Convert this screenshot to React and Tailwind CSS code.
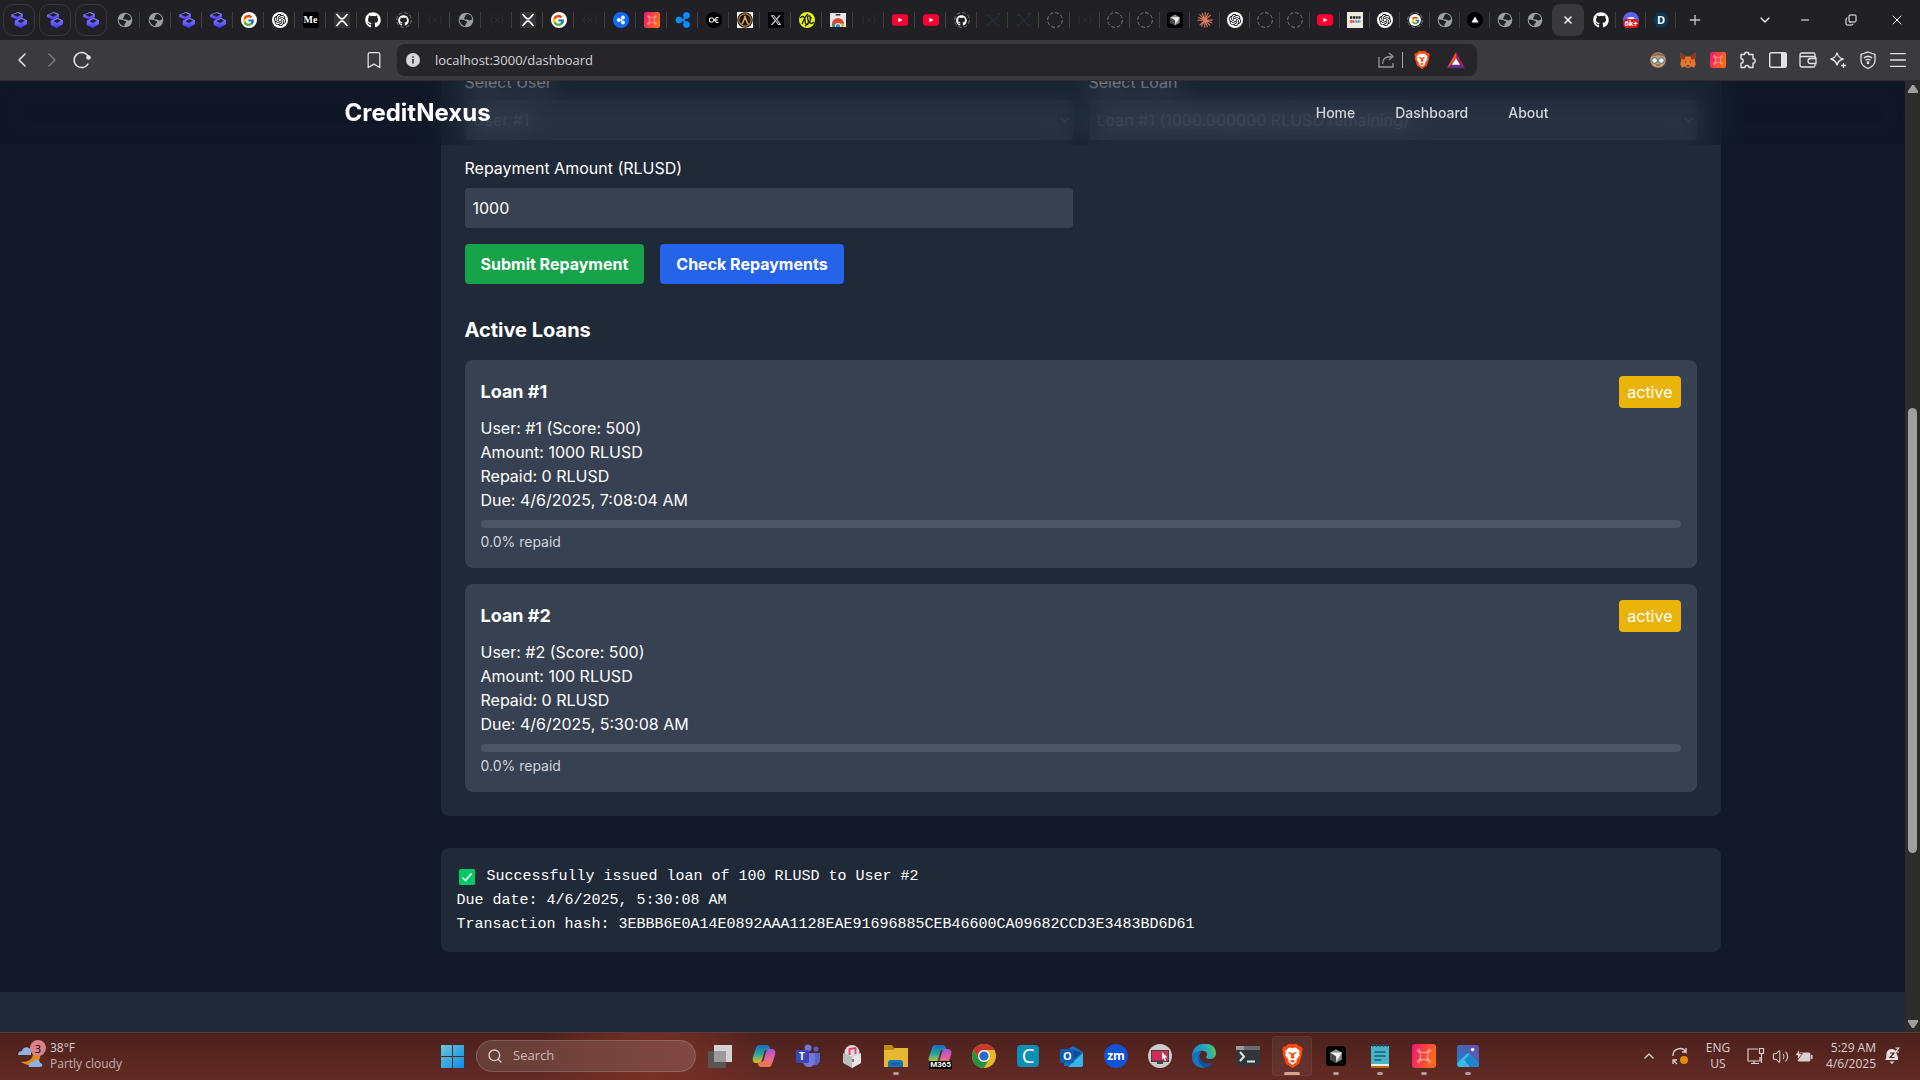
import { useState } from "react"
import {
  ChevronLeft, ChevronRight, ChevronDown, ChevronUp, Bookmark, X, Plus, Minus, Menu,
  Search, Volume2, Copy,
} from "lucide-react"
import { FaGithub, FaXTwitter } from "react-icons/fa6"
import { FcGoogle } from "react-icons/fc"
import { SiOpenai } from "react-icons/si"

/* ---------- tab favicons ---------- */

function StackIcon() {
  return (
    <svg viewBox="0 0 48 48" className="size-4">
      <defs>
        <linearGradient id="stack" x1="0" y1="0" x2="0" y2="1">
          <stop offset="0" stopColor="#8f8bf5" />
          <stop offset="1" stopColor="#3f31ff" />
        </linearGradient>
      </defs>
      <path fill="url(#stack)" fillRule="evenodd" d="M0 8 21 0l15 6v9L20 24 0 15ZM6 8l13 6 12-6-11-5Z" />
      <path fill="url(#stack)" fillRule="evenodd" d="M11 26 32 17l16 8v12L29 48 11 39Zm8 1 11 6 12-7-10-5Z" />
    </svg>
  )
}

function GlobeIcon() {
  return (
    <svg viewBox="0 0 16 16" className="size-4">
      <circle cx="8" cy="8" r="7.3" fill="#9aa0a6" />
      <path fill="#202124" d="M1.7 7.600 6 8c1.200.2 1 1 2 1.100 1.500.2 1.500 1.600.2 2.200-.8.4-.3 1.600-1.200 2.900-3.200-.6-5.400-3.300-5.300-6.600ZM7.300 3.600 9 1.800a6.300 6.300 0 0 1 5.200 5.500l-2.500 1.100c-1.200.3-1.500-.7-2.700-.8-1.500-.2-2.600 0-2.900-1.100-.2-1.200 1.500-1 1.200-2.900Z" />
    </svg>
  )
}

function GoogleIcon() {
  return (
    <span className="flex size-4 items-center justify-center rounded-full bg-white">
      <FcGoogle className="size-[13px]" />
    </span>
  )
}

function OpenAiIcon() {
  return (
    <span className="flex size-4 items-center justify-center rounded-full bg-white text-black">
      <SiOpenai className="size-3" />
    </span>
  )
}

function MediumIcon() {
  return (
    <span className="flex size-4 items-center justify-center rounded-xs bg-black font-['Liberation_Serif',serif] text-[10px] leading-4 font-bold text-white">
      Me
    </span>
  )
}

function XrplIcon() {
  return (
    <svg viewBox="0 0 16 16" className="size-4">
      <path fill="#343434" d="M0 0h16v16H0z" />
      <path fill="none" stroke="#fff" strokeWidth="1.700" d="m2.500 2 3.200 3.700c1.300 1.500 3.300 1.500 4.600 0L13.500 2M2.500 14l3.200-3.700c1.300-1.500 3.300-1.500 4.600 0l3.200 3.700" />
    </svg>
  )
}

function Ring() {
  return (
    <svg viewBox="0 0 16 16" className="absolute inset-0 size-4">
      <circle cx="8" cy="8" r="7.400" fill="none" stroke="#77777c" strokeWidth="1" strokeDasharray="3.800 2" />
    </svg>
  )
}

function GithubIcon() {
  return <FaGithub className="size-4 text-white" />
}

function GithubLoadingIcon() {
  return (
    <span className="relative flex size-4 items-center justify-center">
      <Ring />
      <FaGithub className="size-[11px] text-white" />
    </span>
  )
}

function GoogleLoadingIcon() {
  return (
    <span className="relative flex size-4 items-center justify-center">
      <Ring />
      <span className="relative flex size-3 items-center justify-center rounded-full bg-white">
        <FcGoogle className="size-[9px]" />
      </span>
    </span>
  )
}

function LoadingIcon() {
  return (
    <span className="relative size-4">
      <Ring />
    </span>
  )
}

function BracesIcon() {
  return (
    <svg viewBox="0 0 16 16" className="size-4" fill="none" stroke="#2c3034" strokeWidth="1">
      <path d="M4 3C2 3 3 5.500 2.500 7L1 8l1.500 1C3 10.500 2 13 4 13M12 3c2 0 1 2.500 1.500 4L15 8l-1.500 1c-.5 1.500.5 4-1.500 4M5.500 5.500l5 5M10.500 5.500l-5 5" />
    </svg>
  )
}

function FaintXIcon() {
  return (
    <svg viewBox="0 0 16 16" className="size-4" fill="none" stroke="#263038" strokeWidth="1.200">
      <path d="M1 3c4-2 8 10 14 11M15 1C13 6 6 9 1 14M1 3l4 1M11 2l4-1" />
    </svg>
  )
}

function Ripple({ color }) {
  return (
    <g fill={color} stroke={color}>
      <circle cx="4" cy="8" r="3" />
      <circle cx="11.500" cy="3.500" r="3" />
      <circle cx="11.500" cy="12.500" r="3" />
      <path strokeWidth="2" fill="none" d="M5 8h3c2 0 1.500-4 3.500-4.500M8 8c2 0 1.500 4 3.500 4.500" />
    </g>
  )
}

function RippleCircleIcon() {
  return (
    <svg viewBox="0 0 16 16" className="size-4">
      <circle cx="8" cy="8" r="8" fill="#0c6cf8" />
      <g transform="translate(3.500 3.500) scale(.56)"><Ripple color="#fff" /></g>
    </svg>
  )
}

function RippleIcon() {
  return (
    <svg viewBox="0 0 16 16" className="size-4">
      <Ripple color="#0a8cff" />
    </svg>
  )
}

function GemIcon({ className = "size-4" }) {
  return (
    <svg viewBox="0 0 24 24" className={className}>
      <defs>
        <linearGradient id="gem" x1="0" y1="0" x2="1" y2="0.300">
          <stop offset="0" stopColor="#f0147a" />
          <stop offset="1" stopColor="#f96a18" />
        </linearGradient>
      </defs>
      <rect width="24" height="24" rx="3" fill="url(#gem)" />
      <path fill="none" stroke="#ffb09c" strokeWidth="1.200" d="M7 7c3 2 7 2 10 0-2 3-2 7 0 10-3-2-7-2-10 0 2-3 2-7 0-10Z" />
      <g fill="none" stroke="#ffb09c" strokeWidth="1">
        <circle cx="6.500" cy="6.500" r="1.200" /><circle cx="17.500" cy="6.500" r="1.200" />
        <circle cx="6.500" cy="17.500" r="1.200" /><circle cx="17.500" cy="17.500" r="1.200" />
      </g>
    </svg>
  )
}

function OxIcon() {
  return (
    <svg viewBox="0 0 16 16" className="size-4">
      <circle cx="8" cy="8" r="8" fill="#000" />
      <path fill="none" stroke="#fff" strokeWidth="1.100" d="M12.500 5.500h-2L6.500 10h-2q-1 0-1-1V7q0-1 1-1h2l4 4.500h2M9 8h3" />
    </svg>
  )
}

function GoldIcon() {
  return (
    <svg viewBox="0 0 16 16" className="size-4">
      <path fill="#fff" d="M0 0h16v16H0z" />
      <circle cx="8" cy="8" r="7.800" fill="#19130d" />
      <circle cx="8" cy="8" r="6.200" fill="none" stroke="#b98439" strokeWidth="1.200" />
      <path fill="none" stroke="#d6a45c" strokeWidth="1.500" d="M4.500 12.500C6 11 7 8 8 4c1 4 2 7 3.500 8.500M8 4v4" />
    </svg>
  )
}

function TwitterIcon() {
  return (
    <span className="flex size-4 items-center justify-center bg-black text-gray-300">
      <FaXTwitter className="size-3" />
    </span>
  )
}

function LimeIcon() {
  return (
    <svg viewBox="0 0 16 16" className="size-4">
      <circle cx="8" cy="8" r="8" fill="#e2f317" />
      <path fill="none" stroke="#1b1c13" strokeWidth="1.300" d="M1 6c3-3 5-1 5 2s1 6 3 4-2-7 0-8 3 2 2 5 2 3 4 1M3 12c2-4 3-8 6-10M6 14c2-2 6-4 6-9" />
    </svg>
  )
}

function StoreIcon() {
  return (
    <svg viewBox="0 0 16 16" className="size-4">
      <path fill="#e8e8e8" d="M0 1h16v14H0z" />
      <rect x="5.500" y="2" width="5" height="1.500" rx=".7" fill="#333" />
      <path fill="#db4437" d="M2 12a6 6 0 0 1 12 0l-3 3H5Z" />
      <path fill="#f4b400" d="M10 11.500h4.200l-.7 3.500H9Z" />
      <path fill="#0f9d58" d="M1.900 11.500 6 14v1H2.500Z" />
      <path fill="#fff" d="M4.900 15a3.200 3.200 0 1 1 6.200 0Z" />
      <path fill="#4285f4" d="M5.800 15a2.300 2.300 0 1 1 4.400 0Z" />
    </svg>
  )
}

function YoutubeIcon() {
  return (
    <svg viewBox="0 0 16 16" className="size-4">
      <rect y="2.300" width="16" height="11.400" rx="3" fill="#ff0033" />
      <path fill="#fff" d="m6.300 5.700 4.200 2.300-4.200 2.300Z" />
    </svg>
  )
}

function CursorIcon({ className = "size-4" }) {
  return (
    <svg viewBox="0 0 16 16" className={className}>
      <rect width="16" height="16" rx="3" fill="#000" />
      <path fill="#8d8d8d" d="m8 2.500 4.700 2.700v5.600L8 13.500l-4.700-2.700V5.200Z" />
      <path fill="#4a4a4a" d="m3.300 5.200 4.700 3v5.300l-4.700-2.700Z" />
      <path fill="#f4f4f4" d="M3.300 5.200h9.400L8.200 12.600V8.100Z" />
    </svg>
  )
}

function ClaudeIcon() {
  return (
    <svg viewBox="0 0 16 16" className="size-4" stroke="#d97757" strokeWidth="1.100" strokeLinecap="round">
      <path d="M8.300.6 7.700 15.200M.8 8.300l14.400-.2M2.800 2.600l10 10.800M13.400 3.200 3 13M5.300 1.200l5 13.600M11.300 1.300 4.700 14.200M1.400 5.400l13.400 5.400" />
    </svg>
  )
}

function HackIcon() {
  return (
    <svg viewBox="0 0 16 16" className="size-4">
      <path fill="#edeadd" d="M0 0h16v16H0z" />
      <path stroke="#202020" strokeWidth="2.600" strokeDasharray="2.200 .6" d="M3 5.500h10.500" />
      <path stroke="#d7403e" strokeWidth="2.400" strokeDasharray="1.800 .5" d="M3 9.500h5" />
      <path stroke="#3694d1" strokeWidth="2.400" strokeDasharray="1.800 .5" d="M8.500 9.500h5" />
    </svg>
  )
}

function VercelIcon() {
  return (
    <svg viewBox="0 0 16 16" className="size-4">
      <circle cx="8" cy="8" r="8" fill="#000" />
      <path fill="#fff" d="m8 4.500 3.600 6H4.400Z" />
    </svg>
  )
}

function DiscordIcon() {
  return (
    <span className="relative size-4">
      <svg viewBox="0 0 16 16" className="size-4">
        <circle cx="8" cy="8" r="8" fill="#5865f2" />
        <path fill="#fff" d="M4.500 6c2-1.500 5-1.500 7 0v2h-7Z" />
      </svg>
      <span className="absolute bottom-0 left-1/2 -translate-x-1/2 rounded-[3px] bg-[#e0151b] px-px font-['Roboto',sans-serif] text-[8px] leading-[9px] font-bold text-white">
        6k+
      </span>
    </span>
  )
}

function DocsIcon() {
  return (
    <span className="relative flex size-4 items-center justify-center">
      <svg viewBox="0 0 16 16" className="absolute inset-0 size-4">
        <path fill="#0a3a50" d="M4 .8h8L16 8l-4 7.200H4L0 8Z" />
      </svg>
      <span className="relative text-[11px] leading-4 font-bold text-white">D</span>
    </span>
  )
}

const wideTabs = [
  GlobeIcon, GlobeIcon, StackIcon, StackIcon, GoogleIcon, OpenAiIcon, MediumIcon, XrplIcon,
  GithubIcon, GithubLoadingIcon, BracesIcon, GlobeIcon, BracesIcon, XrplIcon, GoogleIcon,
  BracesIcon, RippleCircleIcon, GemIcon, RippleIcon, OxIcon, GoldIcon, TwitterIcon, LimeIcon,
  StoreIcon, BracesIcon, YoutubeIcon, YoutubeIcon, GithubLoadingIcon, FaintXIcon, FaintXIcon,
  LoadingIcon,
]

const narrowTabs = [
  BracesIcon, LoadingIcon, LoadingIcon, CursorIcon, ClaudeIcon, OpenAiIcon, LoadingIcon,
  LoadingIcon, YoutubeIcon, HackIcon, OpenAiIcon, GoogleLoadingIcon, GlobeIcon, VercelIcon,
  GlobeIcon, GlobeIcon,
]

function Tab({ icon: Icon, wide, last }) {
  return (
    <button className={`relative flex h-8 shrink-0 items-center justify-center ${wide ? "w-[31px]" : "w-[30px]"}`}>
      <Icon />
      {!last && <span className="absolute right-0 h-4 w-px bg-[#3d3d42]" />}
    </button>
  )
}

function TabBar() {
  return (
    <div className="flex h-10 items-center bg-[#202025] text-white">
      <div className="flex gap-1 pl-[3px]">
        {[1, 2, 3].map(n => (
          <button key={n} className="flex size-8 items-center justify-center rounded-[10px] border border-[#38383d]">
            <StackIcon />
          </button>
        ))}
      </div>
      <div className="ml-[2px] flex">
        {wideTabs.map((icon, i) => <Tab key={i} icon={icon} wide />)}
        {narrowTabs.map((icon, i) => <Tab key={i} icon={icon} last={i === narrowTabs.length - 1} />)}
      </div>
      <button className="mx-[2px] flex size-8 shrink-0 items-center justify-center rounded-lg bg-[#38383d]">
        <X className="size-3" strokeWidth={3} />
      </button>
      <Tab icon={GithubIcon} />
      <Tab icon={DiscordIcon} />
      <Tab icon={DocsIcon} />
      <button className="flex w-[38px] shrink-0 items-center justify-center text-[#c6c6c8]">
        <Plus className="size-4" />
      </button>
      <div className="ml-auto flex items-center">
        <button className="flex w-[34px] justify-center"><ChevronDown className="size-4" /></button>
        <button className="flex w-[46px] justify-center"><Minus className="size-3" /></button>
        <button className="flex w-[46px] justify-center"><Copy className="size-3 -scale-x-100 rotate-180" /></button>
        <button className="flex w-[46px] justify-center"><X className="size-4" strokeWidth={1.500} /></button>
      </div>
    </div>
  )
}

/* ---------- toolbar ---------- */

function BraveLion({ className }) {
  return (
    <svg viewBox="0 0 24 28" className={className}>
      <path fill="#ff4a0c" d="M7 0h10l3 3 2-.4L24 6l-1 3 .5 2-4 12-7.500 5-7.500-5L.5 11 1 9 0 6l2-3.400 2 .4Z" />
      <path fill="#fff" fillRule="evenodd" d="m8 4 4 .6L16 4l4.500 4.500-.8 2.500.8 2-4 5.500.5 2-5 4-5-4 .5-2L3.500 13l.8-2-.8-2.500ZM6 10l4 2 .5 2-1 2 2.500 1.200L14.500 16l-1-2 .5-2 4-2-3-.5L12 11l-3-1.500Zm3 10 3 2 3-2-3-1.500Z" />
    </svg>
  )
}

function Toolbar() {
  const [url, setUrl] = useState("localhost:3000/dashboard")
  return (
    <div className="flex h-[41px] items-center border-b border-[#2c2c30] bg-[#3b3b3f] text-[#e4e4e6]">
      <div className="flex w-[397px] shrink-0 items-center pl-[7px]">
        <button className="flex w-[30px] justify-center"><ChevronLeft className="size-6" strokeWidth={1.500} /></button>
        <button className="flex w-[30px] justify-center text-[#7c7c80]"><ChevronRight className="size-6" strokeWidth={1.500} /></button>
        <button className="flex w-[30px] justify-center">
          <svg viewBox="0 0 18 18" className="size-[18px]" fill="none" stroke="currentColor" strokeWidth="1.500">
            <path d="M15.300 12.500A7.500 7.500 0 1 1 15.500 6" />
            <circle cx="15.500" cy="6.500" r="1.600" fill="currentColor" />
          </svg>
        </button>
        <button className="mr-[13px] ml-auto"><Bookmark className="size-5" strokeWidth={1.500} /></button>
      </div>
      <div className="flex h-8 flex-1 items-center rounded-lg bg-[#25252a] pr-3 pl-[9px]">
        <svg viewBox="0 0 14 14" className="size-[14px]">
          <circle cx="7" cy="7" r="7" fill="#d7d7da" />
          <path stroke="#25252a" strokeWidth="1.500" d="M7 6v4.500M7 3.200v1.500" />
        </svg>
        <input
          aria-label="Address"
          value={url}
          onChange={e => setUrl(e.target.value)}
          className="ml-[15px] flex-1 bg-transparent pt-px text-[13px] text-[#d5d5d8] outline-none"
        />
        <svg viewBox="0 0 18 18" className="size-[18px]" fill="none" stroke="#97979c" strokeWidth="1.300">
          <path d="M2 6v10h14v-4M5.500 13c0-5 3-7.500 9-7.500M12 2l4 3.500L12 9" />
        </svg>
        <span className="mx-[7px] h-4 w-px bg-[#a8a8ac]" />
        <BraveLion className="ml-1 h-[18px] w-4" />
        <svg viewBox="0 0 18 16" className="ml-[17px] h-4 w-[18px]">
          <path fill="#ff4724" d="M9 0v6L4.500 13 0 16Z" />
          <path fill="#9e1f63" d="m9 0 9 16-4.500-3L9 6Z" />
          <path fill="#662d91" d="M0 16h18l-4.500-3.500h-9Z" />
          <path fill="#fff" d="m9 6 4 6.800H5Z" />
        </svg>
      </div>
      <div className="flex w-[443px] shrink-0 items-center justify-end pr-[7px]">
        <button aria-label="Profile" className="flex w-[30px] justify-center">
          <svg viewBox="0 0 16 16" className="size-4">
            <circle cx="8" cy="8" r="7.800" fill="#c69c79" />
            <path fill="#8a6b50" d="M1 5C3-.5 13-.5 15 5 11 3 5 3 1 5Z" />
            <circle cx="4.600" cy="8.500" r="2.800" fill="#e9f6f8" stroke="#4d6870" />
            <circle cx="11.400" cy="8.500" r="2.800" fill="#e9f6f8" stroke="#4d6870" />
            <path stroke="#744e38" d="M6 13h4" />
          </svg>
        </button>
        <button aria-label="Wallet extension" className="flex w-[30px] justify-center">
          <svg viewBox="0 0 16 16" className="size-4">
            <path fill="#e8762b" d="m.8.500 4.700 4h5l4.700-4 .3 5-.8 2 1 4.500-1.500 3.500-3.200-1-1.500 1.200h-3L5 14.500l-3.200 1L.3 12l1-4.500-.8-2Z" />
            <path fill="#8f3a15" d="m.8.500 4.700 4-1 3.500-3-1-1-1.500ZM15.200.5l-4.700 4 1 3.500 3-1 1-1.500Z" />
            <path fill="#2b3140" d="m4.500 9 2 .8-.8 1ZM11.500 9l-2 .8.8 1ZM6.500 13.300h3v1.300h-3Z" />
          </svg>
        </button>
        <button aria-label="Gem extension" className="flex w-[30px] justify-center"><GemIcon /></button>
        <button aria-label="Extensions" className="flex w-[30px] justify-center">
          <svg viewBox="0 0 18 18" className="size-[18px]" fill="none" stroke="#e4e4e6" strokeWidth="1.400" strokeLinejoin="round">
            <path d="M2 3.500h3.500a2.200 2.200 0 0 1 4.400 0H14v4.300a2.200 2.200 0 0 1 0 4.400v4.300h-4a2 2 0 0 0-4 0H2v-4.300a2.200 2.200 0 0 0 0-4.400Z" />
          </svg>
        </button>
        <button aria-label="Sidebar" className="flex w-[30px] justify-center">
          <svg viewBox="0 0 18 16" className="h-4 w-[18px]">
            <rect x=".7" y=".7" width="16.600" height="14.600" rx="1.500" fill="none" stroke="#e4e4e6" strokeWidth="1.400" />
            <path fill="#e4e4e6" d="M12 1h5v14h-5z" />
          </svg>
        </button>
        <button aria-label="Wallet" className="flex w-[30px] justify-center">
          <svg viewBox="0 0 18 16" className="h-4 w-[18px]" fill="none" stroke="#e4e4e6" strokeWidth="1.300">
            <path d="M16 5V2.500Q16 1 14.500 1H3Q1 1 1 3v10q0 2 2 2h11.500q1.500 0 1.500-1.500V12M1.500 4.500H15Q17 4.500 17 6v5.500h-5.500a2.300 2.300 0 0 1 0-5H17" />
          </svg>
        </button>
        <button aria-label="Assistant" className="flex w-[30px] justify-center">
          <svg viewBox="0 0 18 18" className="size-[18px]" fill="none" stroke="#e4e4e6" strokeWidth="1.300">
            <path d="M8 1.500C8.700 5.500 10.500 7.300 14.500 8 10.500 8.700 8.700 10.500 8 14.500 7.300 10.500 5.500 8.700 1.500 8 5.500 7.300 7.300 5.500 8 1.500ZM14.500 12v5M12 14.500h5" />
          </svg>
        </button>
        <button aria-label="VPN" className="flex w-[30px] justify-center">
          <svg viewBox="0 0 18 18" className="size-[18px]" fill="none" stroke="#e4e4e6" strokeWidth="1.300">
            <path d="M9 1l7 2.500V9c0 4-3 7-7 8.500C5 16 2 13 2 9V3.500ZM4.800 7c2.500-2 6-2 8.400 0M6.500 9.300c1.500-1.200 3.500-1.200 5 0" />
            <circle cx="9" cy="11.800" r=".8" fill="#e4e4e6" />
          </svg>
        </button>
        <button aria-label="Menu" className="flex w-[30px] justify-center"><Menu className="size-[22px]" strokeWidth={1.500} /></button>
      </div>
    </div>
  )
}

/* ---------- CreditNexus page ---------- */

const loans = [
  { id: 1, user: 1, score: 500, amount: 1000, repaid: 0, due: "4/6/2025, 7:08:04 AM", status: "active" },
  { id: 2, user: 2, score: 500, amount: 100, repaid: 0, due: "4/6/2025, 5:30:08 AM", status: "active" },
]

function Header() {
  return (
    <header className="absolute inset-x-0 top-0 h-16">
      <div className="absolute inset-0 bg-[#111827]/40 opacity-85 backdrop-blur-md" />
      <div className="relative mx-auto flex h-full max-w-7xl items-center justify-between px-8">
        <a href="#home" className="text-2xl font-bold text-white">CreditNexus</a>
        <nav className="flex gap-4 text-sm font-medium text-[#d1d5db]">
          <a href="#home" className="px-3 py-2">Home</a>
          <a href="#dashboard" className="px-3 py-2">Dashboard</a>
          <a href="#about" className="px-3 py-2">About</a>
        </nav>
      </div>
    </header>
  )
}

function LoanCard({ loan }) {
  const percent = (loan.repaid / loan.amount) * 100
  return (
    <div className="rounded-lg bg-[#374151] p-4">
      <div className="mb-2 flex items-center justify-between">
        <h4 className="text-lg font-bold">Loan #{loan.id}</h4>
        <span className="rounded-sm bg-[#eab308] px-2 py-1">{loan.status}</span>
      </div>
      <p>User: #{loan.user} (Score: {loan.score})</p>
      <p>Amount: {loan.amount} RLUSD</p>
      <p>Repaid: {loan.repaid} RLUSD</p>
      <p>Due: {loan.due}</p>
      <div className="mt-2 h-2 overflow-hidden rounded-full bg-[#4b5563]">
        <div className="h-full bg-[#22c55e]" style={{ width: `${percent}%` }} />
      </div>
      <p className="mt-1 text-sm text-[#d1d5db]">{percent.toFixed(1)}% repaid</p>
    </div>
  )
}

function Dashboard() {
  const [amount, setAmount] = useState("1000")
  return (
    <main className="-mt-[11px] pl-64">
      <div className="mx-auto max-w-7xl">
        <section className="rounded-b-lg bg-[#1f2937] px-6 pb-6">
          <div className="grid grid-cols-2 gap-4">
            <div>
              <label htmlFor="user" className="mb-[6px] block">Select User</label>
              <select id="user" className="h-10 w-full rounded-sm bg-[#374151] px-1 text-white/50">
                <option>User #1</option>
              </select>
            </div>
            <div>
              <label htmlFor="loan" className="mb-[6px] block">Select Loan</label>
              <select id="loan" className="h-10 w-full rounded-sm bg-[#374151] px-1 text-white/50">
                <option>Loan #1 (1000.000000 RLUSD remaining)</option>
              </select>
            </div>
            <div>
              <label htmlFor="amount" className="mb-2 block">Repayment Amount (RLUSD)</label>
              <input
                id="amount"
                value={amount}
                onChange={e => setAmount(e.target.value)}
                className="h-10 w-full rounded-sm bg-[#374151] px-2 outline-none"
              />
            </div>
          </div>
          <div className="mt-4 flex gap-4">
            <button className="rounded-sm bg-[#16a34a] px-4 py-2 font-bold">Submit Repayment</button>
            <button className="rounded-sm bg-[#2563eb] px-4 py-2 font-bold">Check Repayments</button>
          </div>
          <h3 className="mt-8 mb-4 text-xl font-bold">Active Loans</h3>
          <div className="space-y-4">
            {loans.map(loan => <LoanCard key={loan.id} loan={loan} />)}
          </div>
        </section>

        {/* Result log */}
        <section className="mt-8 rounded-lg bg-[#1f2937] px-4 pt-[17px] pb-[15px] font-['Liberation_Mono',monospace] text-[15px] leading-6">
          <p className="flex items-center">
            <svg viewBox="0 0 16 16" className="mr-3 ml-[2px] size-4">
              <rect width="16" height="16" rx="1.500" fill="#00c965" />
              <path fill="none" stroke="#fff" strokeWidth="1.600" d="m3.500 8.500 3 3 6-7" />
            </svg>
            Successfully issued loan of 100 RLUSD to User #2
          </p>
          <p>Due date: 4/6/2025, 5:30:08 AM</p>
          <p className="break-all">Transaction hash: 3EBBB6E0A14E0892AAA1128EAE91696885CEB46600CA09682CCD3E3483BD6D61</p>
        </section>
      </div>
    </main>
  )
}

function Scrollbar() {
  return (
    <div className="flex w-[15px] shrink-0 flex-col items-center bg-[#2c2c2c] py-1">
      <svg viewBox="0 0 10 8" className="h-2 w-[10px]"><path fill="#9f9f9f" d="M4 0h2l4 6v2H0V6Z" /></svg>
      <div className="flex w-full flex-1 flex-col items-center">
        <div className="basis-[34%]" />
        <div className="w-[9px] basis-[48%] rounded-full bg-[#9f9f9f]" />
      </div>
      <svg viewBox="0 0 10 8" className="h-2 w-[10px]"><path fill="#9f9f9f" d="M4 8h2l4-6V0H0v2Z" /></svg>
    </div>
  )
}

/* ---------- taskbar ---------- */

function CopilotIcon() {
  return (
    <svg viewBox="0 0 24 24" className="size-6">
      <defs>
        <linearGradient id="cpA" x1="0" y1="0" x2="0" y2="1">
          <stop offset="0" stopColor="#116cc7" /><stop offset=".5" stopColor="#2aa59d" /><stop offset="1" stopColor="#e2c51b" />
        </linearGradient>
        <linearGradient id="cpB" x1="0" y1="0" x2="0" y2="1">
          <stop offset="0" stopColor="#a552d5" /><stop offset=".5" stopColor="#e0669a" /><stop offset="1" stopColor="#ef7c3d" />
        </linearGradient>
      </defs>
      <path fill="url(#cpA)" d="M7 1h8c2 0 3 2 3.500 5H15c-2 0-2.500 1-3 3l-2 7c-.6 2-2 3-4 3H4c-3 0-4-3-3-6L4 4c.6-2 1.500-3 3-3Z" />
      <path fill="url(#cpB)" d="M17 23H9c-2 0-3-2-3.500-5H9c2 0 2.500-1 3-3l2-7c.6-2 2-3 4-3h2c3 0 4 3 3 6l-3 9c-.6 2-1.500 3-3 3Z" />
    </svg>
  )
}

function M365Icon() {
  return (
    <span className="relative size-6">
      <CopilotIcon />
      <span className="absolute right-0 -bottom-px bg-black px-px font-['Roboto',sans-serif] text-[8px] leading-[8px] font-bold text-white">M365</span>
    </span>
  )
}

function TaskViewIcon() {
  return (
    <svg viewBox="0 0 24 24" className="size-6">
      <path fill="#d6d2d2" d="M6 1h18v17H6z" />
      <path fill="#565656" d="M0 7h18v17H0z" />
      <path fill="#9b9a9a" d="M6 7h12v11H6z" />
    </svg>
  )
}

function TeamsIcon() {
  return (
    <span className="relative size-6">
      <svg viewBox="0 0 24 24" className="size-6">
        <circle cx="12" cy="4" r="3.500" fill="#7177d8" />
        <circle cx="20" cy="5" r="2.500" fill="#5a60c8" />
        <path fill="#5a60c8" d="M16 9h8v7c0 4-4 6-7 5Z" />
        <path fill="#7177d8" d="M7 9h12v8c0 4-3 6-6 6s-6-2-6-6Z" />
        <rect y="6" width="13" height="13" rx="1.500" fill="#3d46b4" />
      </svg>
      <span className="absolute top-[6px] left-[3px] text-[10px] leading-[13px] font-bold text-white">T</span>
    </span>
  )
}

function MusicBoxIcon() {
  return (
    <svg viewBox="0 0 24 24" className="size-6">
      <circle cx="12" cy="8.500" r="7.500" fill="#dcd8dc" />
      <path fill="none" stroke="#dd4467" strokeWidth="1.800" d="M9.500 11V5l6-1v6" />
      <path fill="#bdbdbd" d="m3 9 9 4 9-4v10l-9 5-9-5Z" />
      <path fill="#e4e4e4" d="m12 13 9-4v10l-9 5Z" />
      <path stroke="#565656" strokeWidth="1.500" d="M13 15v3" />
    </svg>
  )
}

function FolderIcon() {
  return (
    <svg viewBox="0 0 24 24" className="size-6">
      <path fill="#c08a0c" d="M0 1h8l2 3h14v4H0Z" />
      <path fill="#e6b733" d="M0 6h9l2-2h13v19H0Z" />
      <path fill="#1274b8" d="M4 23v-4q0-3 3-3h9q3 0 3 3v4Z" />
      <path fill="#0e5690" d="M7 19h9v1.500H7z" />
    </svg>
  )
}

function ChromeIcon() {
  return (
    <svg viewBox="0 0 24 24" className="size-6">
      <circle cx="12" cy="12" r="12" fill="#e8b823" />
      <path fill="#c9372c" d="M1.600 6A12 12 0 0 1 22.400 6H12a6 6 0 0 0-5.200 9Z" />
      <path fill="#259145" d="M1.600 6A12 12 0 0 0 12 24l5.200-9A6 6 0 0 1 6.800 15Z" />
      <circle cx="12" cy="12" r="6" fill="#f1f1f1" />
      <circle cx="12" cy="12" r="4.600" fill="#2a68cf" />
    </svg>
  )
}

function CIcon() {
  return (
    <span className="flex size-[22px] items-center justify-center rounded-[4px] bg-[#0a8fb8] text-[20px] leading-none text-white">C</span>
  )
}

function OutlookIcon() {
  return (
    <span className="relative size-6">
      <svg viewBox="0 0 24 24" className="size-6">
        <path fill="#1b6fc2" d="m4 8 9-6 10 6v14H4Z" />
        <path fill="#35b7e8" d="M23 9v12q0 2-2 2H8Z" />
        <path fill="#124a96" d="m13 6 9 3-8 6-4-3Z" />
        <rect y="5" width="14" height="14" rx="1.500" fill="#0c5cb0" />
      </svg>
      <span className="absolute top-[5px] left-[3px] text-[11px] leading-[14px] font-bold text-white">O</span>
    </span>
  )
}

function ZoomIcon() {
  return (
    <span className="flex size-6 items-center justify-center rounded-full bg-[#1152d6] pb-px text-[12px] leading-none font-bold text-white">zm</span>
  )
}

function RecorderIcon() {
  return (
    <svg viewBox="0 0 24 24" className="size-6">
      <circle cx="12" cy="12" r="12" fill="#cbcbcb" />
      <path fill="#444" d="M3 6h18v12H3zM9 18h6v2H9z" />
      <path fill="#d02d5a" d="M4 7h16v9.500H4z" />
      <path fill="#fff" d="m14 8 5.500 5.500h-2.700l1.500 3-1.500.5-1.300-3L14 15.500Z" />
    </svg>
  )
}

function EdgeIcon() {
  return (
    <svg viewBox="0 0 24 24" className="size-6">
      <defs>
        <linearGradient id="edge" x1="0" y1="0.500" x2="1" y2="0.300">
          <stop offset="0" stopColor="#1b83cc" /><stop offset=".6" stopColor="#29aabd" /><stop offset="1" stopColor="#5cc650" />
        </linearGradient>
      </defs>
      <path fill="#0d54a0" d="M0 12c0-4 5-6 9-4-4 6 2 13 12 11-5 7-21 7-21-7Z" />
      <path fill="url(#edge)" d="M0 12C0-4 24-4 24 9c0 4-3 6-6 6s-4-1-4-2 1-1 1-3-3-4-7-3-6 3-8 5Z" />
      <path fill="#1873bd" d="M9 8C4 12 6 21 13 23.500 3 25-1 17 .5 11 2 8 6 7 9 8Z" />
    </svg>
  )
}

function TerminalIcon() {
  return (
    <svg viewBox="0 0 24 20" className="h-5 w-6">
      <path fill="#333638" d="M0 0h24v20H0z" />
      <path fill="#9a9a9a" d="M0 0h8v4H0z" />
      <path fill="#6b6b6b" d="M8 0h16v4H8z" />
      <path fill="none" stroke="#e5e5e5" strokeWidth="2" d="m4 6 4 4.500L4 15M11 15.500h8" />
    </svg>
  )
}

function BraveTaskIcon() {
  return <BraveLion className="h-6 w-[21px]" />
}

function CursorTaskIcon() {
  return <CursorIcon className="size-5" />
}

function NotepadIcon() {
  return (
    <svg viewBox="0 0 20 24" className="h-6 w-5">
      <path fill="#49b4c9" d="M1 2h18v20H1z" />
      <path fill="#eee" d="M1 20h18v2H1z" />
      <path fill="#b66c12" d="M1 22h18v2H1z" />
      <path stroke="#11617c" strokeWidth="1.500" d="M3 0v3M6.500 0v3M10 0v3M13.500 0v3M17 0v3M4.500 8h11M4.500 12h11M4.500 16h7" />
    </svg>
  )
}

function GemTaskIcon() {
  return <GemIcon className="size-6" />
}

function PhotosIcon() {
  return (
    <svg viewBox="0 0 24 24" className="size-[22px]">
      <defs>
        <linearGradient id="photos" x1="0" y1="1" x2="1" y2="0">
          <stop offset="0" stopColor="#1683d0" /><stop offset="1" stopColor="#6d4ba8" />
        </linearGradient>
      </defs>
      <rect width="24" height="24" rx="3" fill="url(#photos)" />
      <circle cx="17" cy="5" r="2" fill="#e8e3ee" />
      <path fill="#39bbe3" d="m0 20 10-10q2-2 4 0l10 11q0 3-3 3H3q-3 0-3-4Z" />
      <path fill="#1a86c9" d="m14 10 10 11q0 3-3 3h-7L8 16Z" />
    </svg>
  )
}

const apps = [
  { icon: TaskViewIcon, name: "Task view" },
  { icon: CopilotIcon, name: "Copilot" },
  { icon: TeamsIcon, name: "Teams" },
  { icon: MusicBoxIcon, name: "Music" },
  { icon: FolderIcon, name: "File Explorer", open: true },
  { icon: M365Icon, name: "Microsoft 365" },
  { icon: ChromeIcon, name: "Chrome" },
  { icon: CIcon, name: "C" },
  { icon: OutlookIcon, name: "Outlook" },
  { icon: ZoomIcon, name: "Zoom" },
  { icon: RecorderIcon, name: "Recorder" },
  { icon: EdgeIcon, name: "Edge" },
  { icon: TerminalIcon, name: "Terminal" },
  { icon: BraveTaskIcon, name: "Brave", open: true, active: true },
  { icon: CursorTaskIcon, name: "Cursor", open: true },
  { icon: NotepadIcon, name: "Notepad", open: true },
  { icon: GemTaskIcon, name: "Gem", open: true },
  { icon: PhotosIcon, name: "Photos", open: true },
]

function TaskbarApp({ app }) {
  const Icon = app.icon
  return (
    <button aria-label={app.name} className="relative flex h-12 w-11 items-center justify-center">
      {app.active && <span className="absolute inset-x-[2px] inset-y-1 rounded-sm border border-white/5 bg-white/5" />}
      <span className="relative flex"><Icon /></span>
      {app.open && (
        <span className={`absolute bottom-[5px] h-[3px] rounded-full ${app.active ? "w-4 bg-[#d9a08c]" : "w-[6px] bg-[#b09a98]"}`} />
      )}
    </button>
  )
}

function Taskbar() {
  return (
    <footer className="grid h-12 shrink-0 grid-cols-[1fr_auto_1fr] items-center bg-[radial-gradient(circle_at_34%_60%,#7a3226_0%,transparent_9%),linear-gradient(#4b211c,#632a25)] text-[#dcd0cf] shadow-[inset_0_1px_#5e3a38]">
      <div className="flex items-center pl-[18px]">
        <div className="relative size-7">
          <svg viewBox="0 0 28 28" className="size-7">
            <path fill="#e08c1a" d="M15 11h7c2 8-6 17-19 9 8 0 12-3 12-9Z" />
            <path fill="#8fb2e4" d="M0 13c0-3 2-4 4-4 1-5 8-5 9 0v4ZM11 25c-1-3 1-5 4-5 2-4 7-3 7 1 3 0 3 4 0 4Z" />
          </svg>
          <span className="absolute -top-[2px] left-3 flex size-4 items-center justify-center rounded-full bg-[#db818a] text-[11px] leading-none text-black">3</span>
        </div>
        <div className="ml-1 text-[12px] leading-4">
          <p>38°F</p>
          <p className="text-[#c3b0ae]">Partly cloudy</p>
        </div>
      </div>

      <div className="flex items-center">
        <button aria-label="Start" className="flex w-11 justify-center">
          <svg viewBox="0 0 23 23" className="size-[23px]">
            <defs>
              <linearGradient id="win" x1="0" y1="0" x2="1" y2="1">
                <stop offset="0" stopColor="#6ac6d4" /><stop offset="1" stopColor="#0b8cee" />
              </linearGradient>
            </defs>
            <path fill="url(#win)" d="M0 0h11v11H0zM12 0h11v11H12zM0 12h11v11H0zM12 12h11v11H12z" />
          </svg>
        </button>
        <label className="mx-[2px] flex h-8 w-[220px] items-center rounded-full border border-white/15 bg-linear-to-r from-[#653d38] to-[#814841] pl-[10px]">
          <Search className="size-4" strokeWidth={2} />
          <input aria-label="Search" placeholder="Search" className="ml-[10px] w-36 bg-transparent text-[13px] placeholder-[#cdbab8] outline-none" />
        </label>
        {apps.map(app => <TaskbarApp key={app.name} app={app} />)}
      </div>

      <div className="flex items-center justify-end pr-5 text-[12px] leading-4">
        <ChevronUp className="size-4" />
        <svg viewBox="0 0 18 18" className="mr-3 ml-[14px] size-[18px]" fill="none" stroke="#dcd0cf" strokeWidth="1.300">
          <path d="M2 9a7 7 0 0 1 13-4V1M15 5h-4M2 17v-4h4M2 13l4 4" />
          <circle cx="13" cy="13" r="4" fill="#e38b0a" stroke="none" />
        </svg>
        <p className="w-[34px] text-center">ENG<br />US</p>
        <svg viewBox="0 0 18 18" className="mr-[7px] ml-3 size-[18px]" fill="none" stroke="#dcd0cf" strokeWidth="1.200">
          <path d="M11 2H1v12h12v-4M4 16.500h8M7 14v2M12.500 1.500h4v5h-4ZM14.500 6.500V16" />
        </svg>
        <Volume2 className="size-[17px]" strokeWidth={1.500} />
        <svg viewBox="0 0 18 16" className="mx-[6px] h-4 w-[18px]">
          <rect x="2.600" y="4.600" width="12.800" height="8.800" rx="1.500" fill="#dcd0cf" />
          <path fill="#dcd0cf" d="M16 7h1.500v4H16z" />
          <path fill="#dcd0cf" stroke="#59261f" strokeWidth=".8" d="M4.500 1 0 7.500h2.500V12L7.500 5.500H4.500Z" />
        </svg>
        <p className="ml-[7px] text-right">5:29 AM<br />4/6/2025</p>
        <svg viewBox="0 0 16 18" className="ml-2 h-[18px] w-4">
          <path fill="#e8dfde" d="M1 13c2-2 1-4 1.500-7C3.500 2 8 1 11 3l3 7v3ZM5.500 14.500h5L8 17Z" />
          <path fill="none" stroke="#5a2722" strokeWidth="1.200" d="M6 6h4l-4 4.500h4.500" />
          <path fill="none" stroke="#e8dfde" strokeWidth="1.200" d="M11.500 1H15l-3.500 4H15" />
        </svg>
      </div>
    </footer>
  )
}

export default function App() {
  return (
    <div className="flex h-screen flex-col overflow-hidden font-['Open_Sans',sans-serif]">
      <TabBar />
      <Toolbar />
      <div className="flex min-h-0 flex-1">
        <div className="relative flex min-w-0 flex-1 flex-col overflow-hidden bg-[#111827] font-['Inter',sans-serif] text-base text-white">
          <Dashboard />
          <div className="mt-10 flex-1 bg-[#1f2937]" />
          <Header />
        </div>
        <Scrollbar />
      </div>
      <Taskbar />
    </div>
  )
}
